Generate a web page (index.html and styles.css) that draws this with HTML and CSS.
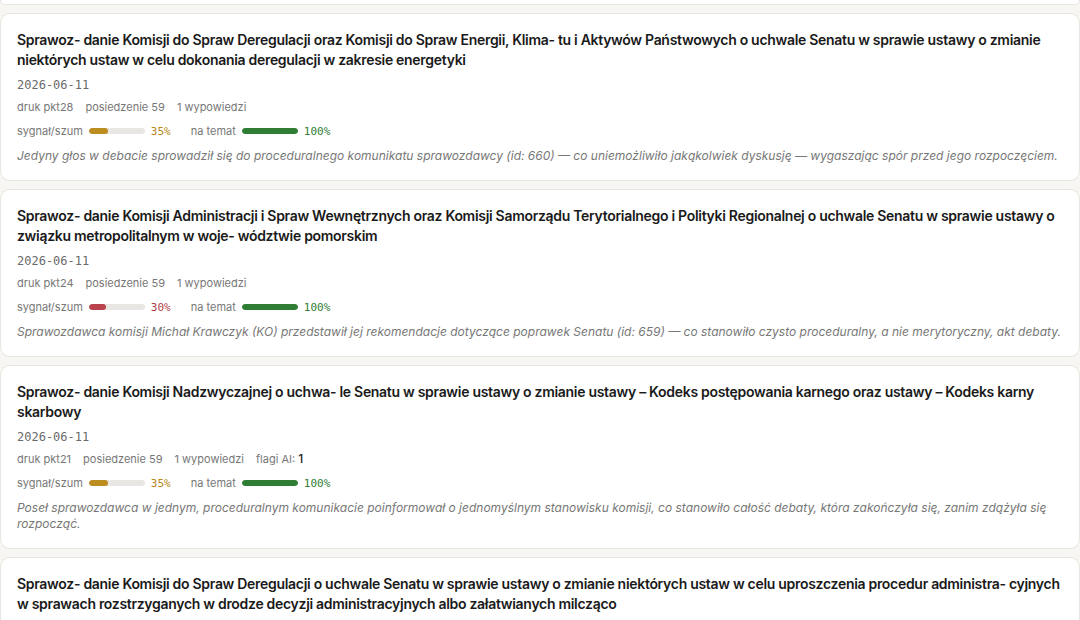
FILE: index.html
```html
<!DOCTYPE html>
<html lang="pl">
<head>
<meta charset="utf-8">
<link rel="stylesheet" href="styles.css">
</head>
<body>
<div class="list">
  <div class="card-tail"></div>

  <div class="card">
    <div class="title">Sprawoz- danie Komisji do Spraw Deregulacji oraz Komisji do Spraw Energii, Klima- tu i Aktywów Państwowych o uchwale Senatu w sprawie ustawy o zmianie niektórych ustaw w celu dokonania deregulacji w zakresie energetyki</div>
    <div class="date">2026-06-11</div>
    <div class="meta"><span>druk pkt28</span><span>posiedzenie 59</span><span>1 wypowiedzi</span></div>
    <div class="bars">
      <div class="metric"><span class="label">sygnał/szum</span><span class="track"><span class="fill amber" style="width:35%"></span></span><span class="pct amber-t">35%</span></div>
      <div class="metric"><span class="label">na temat</span><span class="track"><span class="fill green" style="width:100%"></span></span><span class="pct green-t">100%</span></div>
    </div>
    <div class="summary">Jedyny głos w debacie sprowadził się do proceduralnego komunikatu sprawozdawcy (id: 660) — co uniemożliwiło jakąkolwiek dyskusję — wygaszając spór przed jego rozpoczęciem.</div>
  </div>

  <div class="card">
    <div class="title">Sprawoz- danie Komisji Administracji i Spraw Wewnętrznych oraz Komisji Samorządu Terytorialnego i Polityki Regionalnej o uchwale Senatu w sprawie ustawy o związku metropolitalnym w woje- wództwie pomorskim</div>
    <div class="date">2026-06-11</div>
    <div class="meta"><span>druk pkt24</span><span>posiedzenie 59</span><span>1 wypowiedzi</span></div>
    <div class="bars">
      <div class="metric"><span class="label">sygnał/szum</span><span class="track"><span class="fill red" style="width:30%"></span></span><span class="pct red-t">30%</span></div>
      <div class="metric"><span class="label">na temat</span><span class="track"><span class="fill green" style="width:100%"></span></span><span class="pct green-t">100%</span></div>
    </div>
    <div class="summary">Sprawozdawca komisji Michał Krawczyk (KO) przedstawił jej rekomendacje dotyczące poprawek Senatu (id: 659) — co stanowiło czysto proceduralny, a nie merytoryczny, akt debaty.</div>
  </div>

  <div class="card">
    <div class="title">Sprawoz- danie Komisji Nadzwyczajnej o uchwa- le Senatu w sprawie ustawy o zmianie ustawy – Kodeks postępowania karnego oraz ustawy – Kodeks karny skarbowy</div>
    <div class="date">2026-06-11</div>
    <div class="meta"><span>druk pkt21</span><span>posiedzenie 59</span><span>1 wypowiedzi</span><span>flagi AI: <b class="flag">1</b></span></div>
    <div class="bars">
      <div class="metric"><span class="label">sygnał/szum</span><span class="track"><span class="fill amber" style="width:35%"></span></span><span class="pct amber-t">35%</span></div>
      <div class="metric"><span class="label">na temat</span><span class="track"><span class="fill green" style="width:100%"></span></span><span class="pct green-t">100%</span></div>
    </div>
    <div class="summary">Poseł sprawozdawca w jednym, proceduralnym komunikacie poinformował o jednomyślnym stanowisku komisji, co stanowiło całość debaty, która zakończyła się, zanim zdążyła się rozpocząć.</div>
  </div>

  <div class="card">
    <div class="title">Sprawoz- danie Komisji do Spraw Deregulacji o uchwale Senatu w sprawie ustawy o zmianie niektórych ustaw w celu uproszczenia procedur administra- cyjnych w sprawach rozstrzyganych w drodze decyzji administracyjnych albo załatwianych milcząco</div>
    <div class="date">2026-06-11</div>
    <div class="meta"><span>druk pkt20</span><span>posiedzenie 59</span><span>1 wypowiedzi</span></div>
  </div>
</div>
</body>
</html>
```

FILE: styles.css
```css
html, body {
  margin: 0;
  padding: 0;
  background: #f7f6f3;
  overflow: hidden;
  height: 620px;
}
body {
  font-family: Inter, "Noto Sans", sans-serif;
  color: #1a1a1a;
}
.list {
  display: flex;
  flex-direction: column;
  gap: 8px;
}
.card-tail {
  height: 4px;
  background: #fff;
  border: 1px solid #e8e6e1;
  border-top: none;
  border-radius: 0 0 10px 10px;
}
.card {
  background: #fff;
  border: 1px solid #e8e6e1;
  border-radius: 10px;
  padding: 16px;
}
.title {
  font-size: 14px;
  font-weight: 600;
  line-height: 20px;
  color: #1a1a1a;
  letter-spacing: -0.3px;
}
.date {
  margin-top: 7px;
  font-family: "DejaVu Sans Mono", "Liberation Mono", monospace;
  font-size: 12px;
  line-height: 16px;
  color: #6b6b6b;
}
.meta {
  margin-top: 6px;
  display: flex;
  gap: 12px;
  font-size: 11px;
  line-height: 16px;
  color: #777;
}
.flag {
  font-family: Inter, sans-serif;
  font-weight: 500;
  font-size: 12px;
  color: #222;
}
.bars {
  margin-top: 8px;
  height: 16px;
  display: flex;
  align-items: center;
  gap: 20px;
  font-size: 11px;
  color: #777;
}
.metric {
  display: flex;
  align-items: center;
  gap: 6px;
}
.track {
  display: block;
  width: 56px;
  height: 6px;
  border-radius: 3px;
  background: #e8e7e4;
  overflow: hidden;
}
.fill {
  display: block;
  height: 100%;
  border-radius: 3px;
}
.pct {
  font-family: "DejaVu Sans Mono", "Liberation Mono", monospace;
  font-size: 11px;
}
.amber { background: #bb8d1f; }
.amber-t { color: #b58717; }
.red { background: #b8434d; }
.red-t { color: #b3404a; }
.green { background: #2e7d32; }
.green-t { color: #2e7d32; }
.summary {
  margin-top: 9px;
  font-size: 12px;
  line-height: 16px;
  font-style: italic;
  color: #777;
}
```
